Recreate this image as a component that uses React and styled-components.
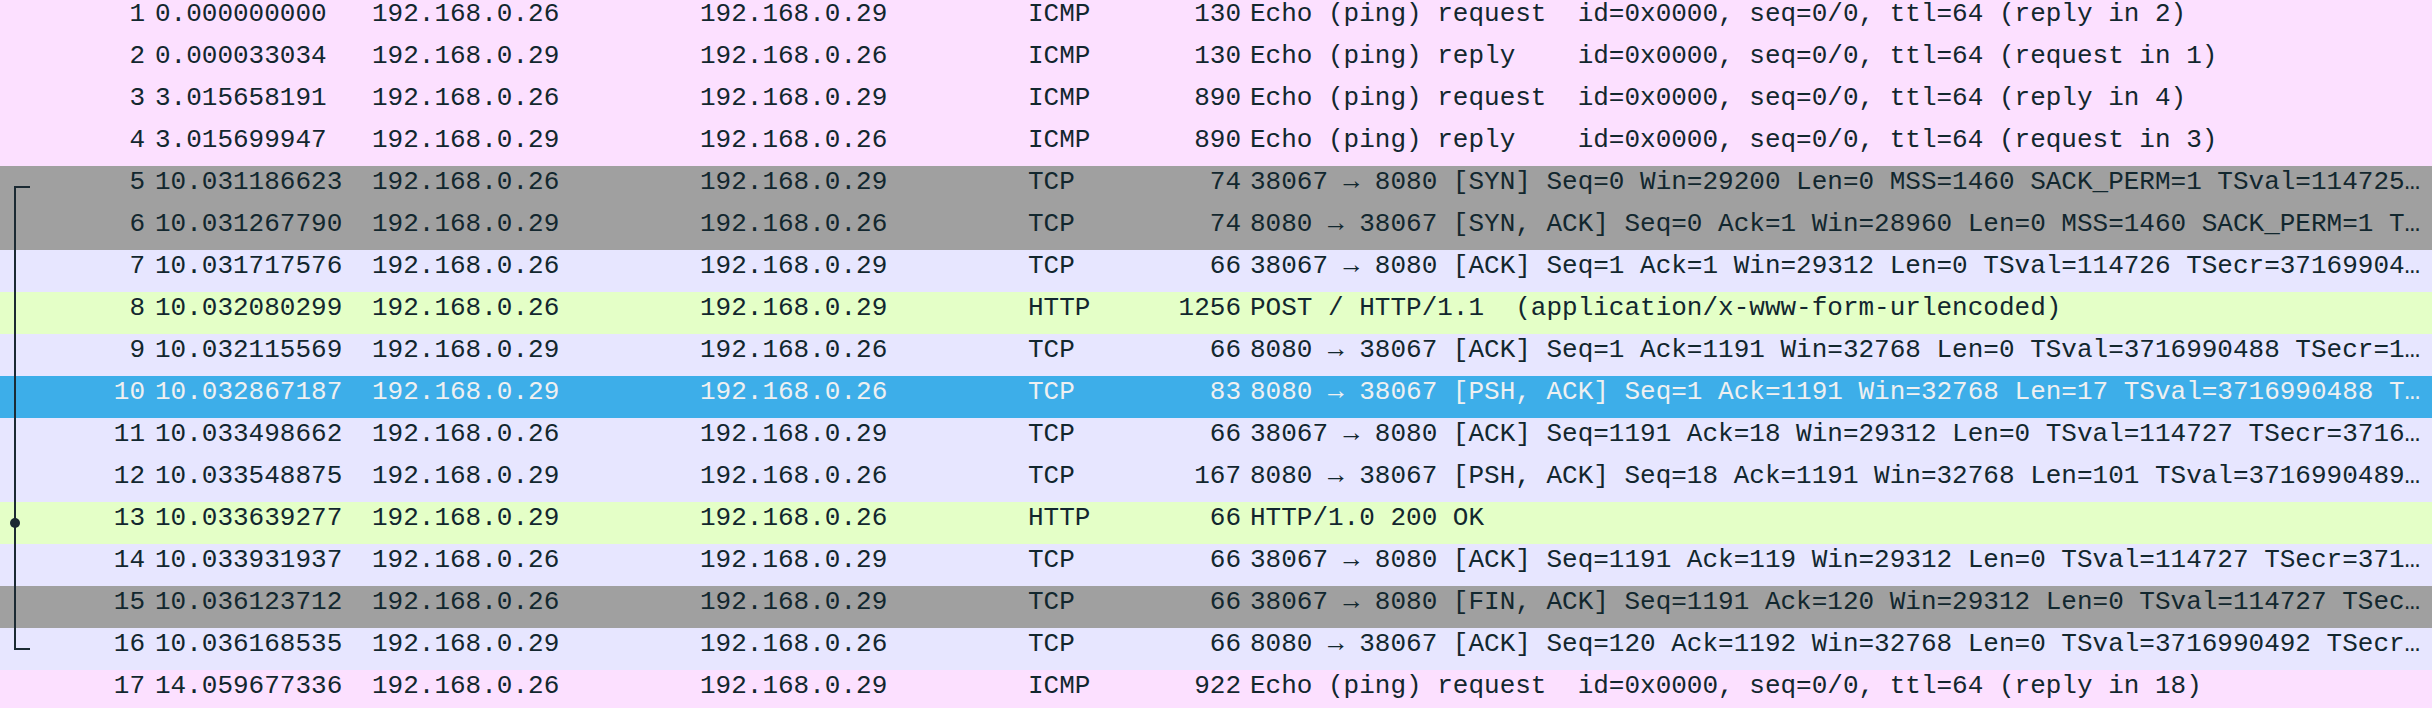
import React from 'react';
import styled, { createGlobalStyle } from 'styled-components';

const GlobalStyle = createGlobalStyle`
  html, body {
    margin:0;
    padding:0;
    background:#ffffff;
    overflow:hidden;
  }
`;

const ROW_BG = {
  icmp: '#fce0ff',
  tcp: '#e7e6ff',
  http: '#e4ffc7',
  flag: '#a0a0a0',
};

const PacketList = styled.div`
  margin-top:-2px;
  width:2432px;
  font-family:"Liberation Mono", "DejaVu Sans Mono", monospace;
  font-size:26px;
`;

const Row = styled.div`
  display:grid;
  grid-template-columns:30px 115px 217px 328px 328px 122px 101px 1fr;
  height:42px;
  line-height:32px;
  background:${p => (p.$selected ? '#3daee9' : ROW_BG[p.$kind])};
  color:${p => (p.$selected ? '#eff0f1' : '#12272e')};
`;

const Gutter = styled.div`
  height:42px;
  svg { display:block; }
`;

const Cell = styled.div`
  white-space:pre;
  overflow:hidden;
`;

const Num = styled(Cell)`
  text-align:right;
`;

const Col = styled(Cell)`
  padding-left:10px;
`;

const Len = styled(Cell)`
  text-align:right;
`;

const Info = styled(Cell)`
  padding-left:9px;
  padding-right:8px;
`;

const packets = [
  ['1', '0.000000000', '192.168.0.26', '192.168.0.29', 'ICMP', '130', 'Echo (ping) request  id=0x0000, seq=0/0, ttl=64 (reply in 2)', 'icmp'],
  ['2', '0.000033034', '192.168.0.29', '192.168.0.26', 'ICMP', '130', 'Echo (ping) reply    id=0x0000, seq=0/0, ttl=64 (request in 1)', 'icmp'],
  ['3', '3.015658191', '192.168.0.26', '192.168.0.29', 'ICMP', '890', 'Echo (ping) request  id=0x0000, seq=0/0, ttl=64 (reply in 4)', 'icmp'],
  ['4', '3.015699947', '192.168.0.29', '192.168.0.26', 'ICMP', '890', 'Echo (ping) reply    id=0x0000, seq=0/0, ttl=64 (request in 3)', 'icmp'],
  ['5', '10.031186623', '192.168.0.26', '192.168.0.29', 'TCP', '74', '38067 → 8080 [SYN] Seq=0 Win=29200 Len=0 MSS=1460 SACK_PERM=1 TSval=114725…', 'flag', 'start'],
  ['6', '10.031267790', '192.168.0.29', '192.168.0.26', 'TCP', '74', '8080 → 38067 [SYN, ACK] Seq=0 Ack=1 Win=28960 Len=0 MSS=1460 SACK_PERM=1 T…', 'flag', 'mid'],
  ['7', '10.031717576', '192.168.0.26', '192.168.0.29', 'TCP', '66', '38067 → 8080 [ACK] Seq=1 Ack=1 Win=29312 Len=0 TSval=114726 TSecr=37169904…', 'tcp', 'mid'],
  ['8', '10.032080299', '192.168.0.26', '192.168.0.29', 'HTTP', '1256', 'POST / HTTP/1.1  (application/x-www-form-urlencoded)', 'http', 'mid'],
  ['9', '10.032115569', '192.168.0.29', '192.168.0.26', 'TCP', '66', '8080 → 38067 [ACK] Seq=1 Ack=1191 Win=32768 Len=0 TSval=3716990488 TSecr=1…', 'tcp', 'mid'],
  ['10', '10.032867187', '192.168.0.29', '192.168.0.26', 'TCP', '83', '8080 → 38067 [PSH, ACK] Seq=1 Ack=1191 Win=32768 Len=17 TSval=3716990488 T…', 'tcp', 'mid', true],
  ['11', '10.033498662', '192.168.0.26', '192.168.0.29', 'TCP', '66', '38067 → 8080 [ACK] Seq=1191 Ack=18 Win=29312 Len=0 TSval=114727 TSecr=3716…', 'tcp', 'mid'],
  ['12', '10.033548875', '192.168.0.29', '192.168.0.26', 'TCP', '167', '8080 → 38067 [PSH, ACK] Seq=18 Ack=1191 Win=32768 Len=101 TSval=3716990489…', 'tcp', 'mid'],
  ['13', '10.033639277', '192.168.0.29', '192.168.0.26', 'HTTP', '66', 'HTTP/1.0 200 OK', 'http', 'dot'],
  ['14', '10.033931937', '192.168.0.26', '192.168.0.29', 'TCP', '66', '38067 → 8080 [ACK] Seq=1191 Ack=119 Win=29312 Len=0 TSval=114727 TSecr=371…', 'tcp', 'mid'],
  ['15', '10.036123712', '192.168.0.26', '192.168.0.29', 'TCP', '66', '38067 → 8080 [FIN, ACK] Seq=1191 Ack=120 Win=29312 Len=0 TSval=114727 TSec…', 'flag', 'mid'],
  ['16', '10.036168535', '192.168.0.29', '192.168.0.26', 'TCP', '66', '8080 → 38067 [ACK] Seq=120 Ack=1192 Win=32768 Len=0 TSval=3716990492 TSecr…', 'tcp', 'end'],
  ['17', '14.059677336', '192.168.0.26', '192.168.0.29', 'ICMP', '922', 'Echo (ping) request  id=0x0000, seq=0/0, ttl=64 (reply in 18)', 'icmp'],
];

// related-packet marker drawn in the gutter
function Marker({ type }) {
  if (!type) return null;
  let d = 'M15 0 V42';
  if (type === 'start') d = 'M30 21 H15 V42';
  if (type === 'end') d = 'M15 0 V21 H30';
  return (
    <svg width="30" height="42" viewBox="0 0 30 42">
      <path d={d} fill="none" stroke="#1b2a33" strokeWidth="2" />
      {type === 'dot' && <circle cx="15" cy="21" r="5" fill="#1b2a33" />}
    </svg>
  );
}

function App() {
  return (
    <>
      <GlobalStyle />
      <PacketList>
        {packets.map(p => (
          <Row key={p[0]} $kind={p[7]} $selected={p[9]}>
            <Gutter><Marker type={p[8]} /></Gutter>
            <Num>{p[0]}</Num>
            <Col>{p[1]}</Col>
            <Col>{p[2]}</Col>
            <Col>{p[3]}</Col>
            <Col>{p[4]}</Col>
            <Len>{p[5]}</Len>
            <Info>{p[6]}</Info>
          </Row>
        ))}
      </PacketList>
    </>
  );
}

export default App;
